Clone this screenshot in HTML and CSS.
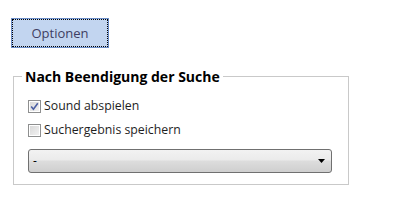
FILE: index.html
```html
<!DOCTYPE html>
<html lang="de">
<head>
<meta charset="utf-8">
<link rel="stylesheet" href="styles.css">
</head>
<body>
<div class="page">
  <button class="btn" type="button">Optionen</button>
  <fieldset class="group">
    <legend class="group-title">Nach Beendigung der Suche</legend>
    <label class="check">
      <span class="box checked">
        <svg viewBox="0 0 9 9" width="9" height="9"><path d="M1.2 4.6 L3.4 7.2 L7.8 1.2" fill="none" stroke="#4b5fa3" stroke-width="1.6"/></svg>
      </span>
      <span class="check-label">Sound abspielen</span>
    </label>
    <label class="check">
      <span class="box"></span>
      <span class="check-label">Suchergebnis speichern</span>
    </label>
    <div class="select">
      <span class="select-value">-</span>
      <svg class="select-arrow" viewBox="0 0 7 4" width="7" height="4"><path d="M0 0 H7 L3.5 4 Z" fill="#000"/></svg>
    </div>
  </fieldset>
</div>
</body>
</html>
```
FILE: styles.css
```css
html, body {
  margin: 0;
  padding: 0;
  background: #ffffff;
}
body {
  font-family: "Open Sans", "Noto Sans", sans-serif;
  font-size: 12.3px;
  color: #1e1e1e;
}
.page {
  display: flex;
  flex-direction: column;
  align-items: flex-start;
  padding-top: 18px;
}
.btn {
  margin: 0 0 0 11px;
  width: 98px;
  height: 30px;
  padding: 0;
  border: 1px solid #6b8dc7;
  background: #c2d5f0;
  font-family: inherit;
  font-size: 13px;
  color: #3e3e62;
  outline: 1px dotted #000;
  outline-offset: -2px;
}
.group {
  margin: 19px 0 0 13px;
  width: 336px;
  box-sizing: border-box;
  border: 1px solid #c9c9c9;
  padding: 0 16px 11px 14px;
  display: flex;
  flex-direction: column;
}
.group-title {
  margin-left: -6px;
  padding: 0 3px;
  font-weight: 700;
  font-size: 14px;
  line-height: 19px;
  color: #000;
}
.check {
  display: flex;
  align-items: center;
  gap: 3px;
  height: 24px;
}
.check:first-of-type {
  margin-top: 8px;
}
.box {
  width: 13px;
  height: 13px;
  box-sizing: border-box;
  border: 1px solid #8e8f8f;
  background: linear-gradient(135deg, #d6d6d6 0%, #f4f4f4 100%);
  box-shadow: inset 0 0 0 1px #fff;
  display: flex;
  align-items: center;
  justify-content: center;
}
.check-label {
  line-height: 16px;
}
.select {
  margin-top: 7px;
  height: 24px;
  box-sizing: border-box;
  border: 1px solid #707070;
  border-radius: 3px;
  background: linear-gradient(to bottom, #f2f2f2 0%, #ebebeb 45%, #dddddd 50%, #cfcfcf 100%);
  display: flex;
  align-items: center;
  justify-content: space-between;
  padding: 0 6px 0 4px;
}
.select-value {
  font-size: 12px;
  line-height: 16px;
  color: #000;
}
```
